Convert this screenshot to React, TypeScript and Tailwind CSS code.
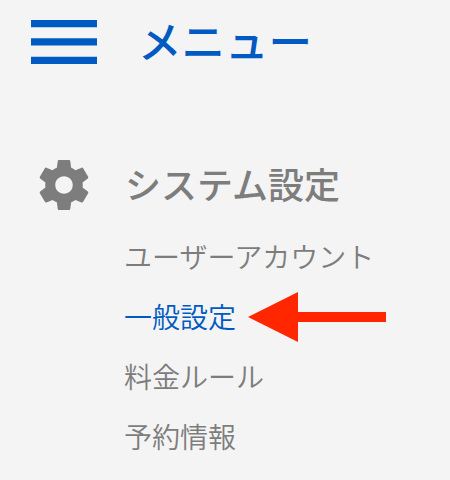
const items = [
  { label: "ユーザーアカウント" },
  { label: "一般設定", active: true },
  { label: "料金ルール" },
  { label: "予約情報" },
];

function MenuIcon() {
  return (
    <svg viewBox="0 0 66 44" className="h-[44px] w-[66px] shrink-0" fill="currentColor">
      <path d="M0 0h66v7.3H0zM0 18.3h66v7.3H0zM0 36.7h66V44H0z" />
    </svg>
  );
}

function GearIcon() {
  return (
    <svg viewBox="2 2 20 20" className="size-[50px] shrink-0" fill="currentColor">
      <path d="M19.43 12.98c.04-.32.07-.64.07-.98s-.03-.66-.07-.98l2.11-1.65c.19-.15.24-.42.12-.64l-2-3.46c-.12-.22-.39-.3-.61-.22l-2.49 1c-.52-.4-1.08-.73-1.69-.98l-.38-2.65C14.46 2.18 14.25 2 14 2h-4c-.25 0-.46.18-.49.42l-.38 2.65c-.61.25-1.17.59-1.69.98l-2.49-1c-.23-.09-.49 0-.61.22l-2 3.46c-.13.22-.07.49.12.64l2.11 1.65c-.04.32-.07.65-.07.98s.03.66.07.98l-2.11 1.65c-.19.15-.24.42-.12.64l2 3.46c.12.22.39.3.61.22l2.49-1c.52.4 1.08.73 1.69.98l.38 2.65c.03.24.24.42.49.42h4c.25 0 .46-.18.49-.42l.38-2.65c.61-.25 1.17-.59 1.69-.98l2.49 1c.23.09.49 0 .61-.22l2-3.46c.12-.22.07-.49-.12-.64l-2.11-1.65zM12 15.5c-1.93 0-3.5-1.57-3.5-3.5s1.57-3.5 3.5-3.5 3.5 1.57 3.5 3.5-1.57 3.5-3.5 3.5z" />
    </svg>
  );
}

export default function App() {
  return (
    <div className="h-[480px] w-[450px] overflow-hidden bg-[#f4f4f4] font-['Noto_Sans_CJK_JP',sans-serif] text-[#7d7d7d]">
      <header className="flex h-[84px] items-center pl-[31px] text-[#005ac2]">
        <MenuIcon />
        <h1 className="ml-[41px] pb-[4px] text-[43.5px] leading-none font-medium">メニュー</h1>
      </header>
      <div className="mt-[71px] flex h-[60px] items-center pl-[39px]">
        <GearIcon />
        <h2 className="ml-[36px] pb-[4px] text-[36px] leading-none font-medium">システム設定</h2>
      </div>
      <ul className="mt-[12px] pl-[124px] text-[28px] font-[350]">
        {items.map((item) => (
          <li key={item.label} className="flex h-[60px] items-center leading-none">
            <span className={item.active ? "pb-[2px] text-[#005ac2]" : "pb-[2px]"}>{item.label}</span>
            {item.active && (
              <svg viewBox="0 0 138 50" className="ml-[12px] h-[50px] w-[138px]" fill="#ff2600">
                <path d="M0 25 50 0v20h88v10H50v20z" />
              </svg>
            )}
          </li>
        ))}
      </ul>
    </div>
  );
}
